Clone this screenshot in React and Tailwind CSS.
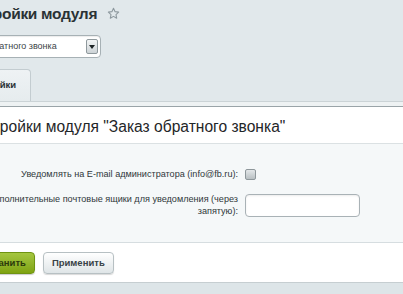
import React from "react";

const font = { fontFamily: '"Liberation Sans", Arial, sans-serif' };

const Star = () => (
  <svg width="13" height="13" viewBox="0 0 24 24" fill="none" stroke="#8d989e" strokeWidth="2" strokeLinejoin="round">
    <path d="M12 2.5l2.9 6.1 6.6.8-4.9 4.6 1.3 6.6L12 17.3l-5.9 3.3 1.3-6.6-4.9-4.6 6.6-.8z" />
  </svg>
);

export default function App() {
  return (
    <div className="w-[403px] h-[294px] overflow-hidden bg-[#e1e8eb] text-[#2c3336]" style={font}>
      {/* Page title */}
      <div className="h-[27px] flex items-center gap-[10px] ml-[-42px]">
        <h1 className="text-[15.5px] font-bold tracking-[-0.3px] text-[#2a3235] whitespace-nowrap">Настройки модуля</h1>
        <Star />
      </div>

      {/* Module select */}
      <div className="mt-[8px] h-[23px] w-[149px] ml-[-48px] flex items-center justify-between rounded-[4px] border border-[#a7b1b5] bg-white pl-[5px] pr-[2px] shadow-[inset_0_1px_1px_rgba(0,0,0,0.08)]">
        <span className="text-[9px] text-[#3c4448] whitespace-nowrap">Заказ обратного звонка</span>
        <span className="w-[12px] h-[15px] flex items-center justify-center rounded-[2px] border border-[#8f999d] bg-gradient-to-b from-[#f3f5f6] to-[#cdd3d6]">
          <span className="w-0 h-0 border-l-[3px] border-r-[3px] border-t-[4px] border-l-transparent border-r-transparent border-t-[#1d2325]" />
        </span>
      </div>

      {/* Tabs */}
      <div className="mt-[11px] h-[32px] flex">
        <div className="ml-[-48px] h-full px-[14px] flex items-center rounded-tr-[4px] border-r border-t border-[#c3ccd0] bg-gradient-to-b from-[#eef2f4] to-[#e6ecee] text-[9.5px] font-bold text-[#2a3235] whitespace-nowrap">
          Настройки
        </div>
      </div>
      <div className="h-[5px] border-t border-[#cbd3d6] bg-[#eef2f3]" />

      {/* Settings panel */}
      <div className="border-t border-[#9aa4a8] bg-white">
        <div className="h-[37px] flex items-end pb-[5px] border-b border-[#dbe1e3]">
          <h2 className="ml-[-35px] text-[15.6px] text-[#1f2628] whitespace-nowrap">
            Настройки модуля "Заказ обратного звонка"
          </h2>
        </div>

        <div className="bg-[#f5f8f9] h-[98px] pt-[25px] text-[9.1px] text-[#2f3739]">
          <div className="flex items-center gap-[7px] h-[11px]">
            <div className="w-[238px] shrink-0 flex justify-end">
              <span className="whitespace-nowrap">Уведомлять на E-mail администратора (info@fb.ru):</span>
            </div>
            <span className="w-[11px] h-[11px] rounded-[2px] border border-[#8e979b] bg-gradient-to-b from-[#e3e7e9] to-[#b9c0c3]" />
          </div>

          <div className="mt-[13px] flex items-center gap-[7px]">
            <div className="w-[238px] shrink-0 flex justify-end">
              <span className="whitespace-nowrap text-right leading-[12px]">
                Дополнительные почтовые ящики для уведомления (через
                <br />
                запятую):
              </span>
            </div>
            <span className="w-[115px] h-[23px] rounded-[4px] border border-[#a9b2b6] bg-white shadow-[inset_0_1px_2px_rgba(0,0,0,0.08)]" />
          </div>
        </div>

        <div className="h-[41px] border-t border-[#d6dde0] border-b border-b-[#c6ced1] flex items-center gap-[8px] pt-[1px]">
          <button className="ml-[-34px] h-[22px] px-[8px] rounded-[4px] border border-[#6f9412] bg-gradient-to-b from-[#a5c63f] to-[#7fa30f] text-[9.5px] font-bold text-[#2c3a0b] whitespace-nowrap shadow-[0_1px_1px_rgba(0,0,0,0.2)]">
            Сохранить
          </button>
          <button className="h-[22px] px-[8px] rounded-[4px] border border-[#b7c0c3] bg-gradient-to-b from-[#ffffff] to-[#dfe5e7] text-[9.5px] font-bold text-[#3a4347] whitespace-nowrap shadow-[0_1px_1px_rgba(0,0,0,0.15)]">
            Применить
          </button>
        </div>
      </div>
      <div className="h-[12px] bg-[#dde5e8]" />
    </div>
  );
}
